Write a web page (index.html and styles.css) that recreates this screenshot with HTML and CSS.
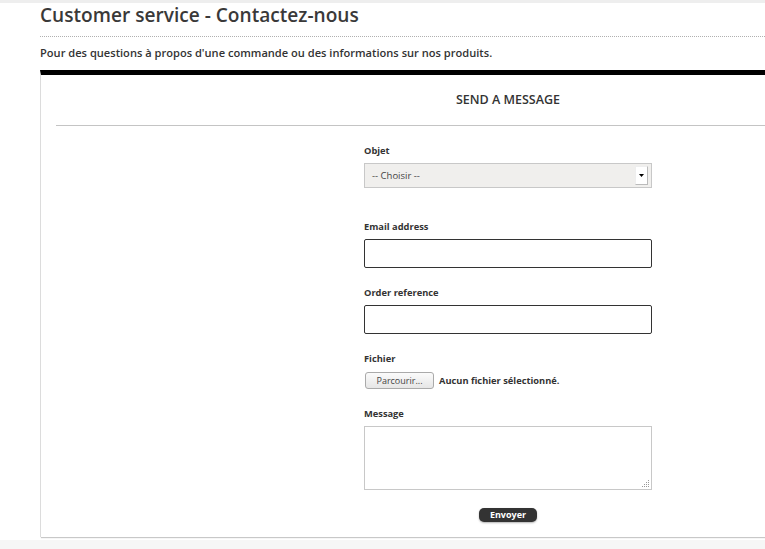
FILE: index.html
```html
<!DOCTYPE html>
<html lang="fr">
<head>
<meta charset="utf-8">
<title>Customer service - Contactez-nous</title>
<link rel="stylesheet" href="styles.css">
</head>
<body>
<div class="page">
  <h1 class="page-heading">Customer service - Contactez-nous</h1>
  <p class="intro">Pour des questions à propos d'une commande ou des informations sur nos produits.</p>
  <form class="contact-box">
    <h3 class="box-title">SEND A MESSAGE</h3>
    <div class="box-body">
      <div class="side"></div>
      <div class="fields">
        <div class="group">
          <label class="lbl">Objet</label>
          <div class="select">
            <span class="select-text">-- Choisir --</span>
            <span class="select-arrow"><svg width="5" height="3" viewBox="0 0 5 3"><path d="M0 0H5L2.5 3Z" fill="#000"/></svg></span>
          </div>
        </div>
        <div class="group">
          <label class="lbl">Email address</label>
          <div class="input"></div>
        </div>
        <div class="group">
          <label class="lbl">Order reference</label>
          <div class="input"></div>
        </div>
        <div class="group">
          <label class="lbl">Fichier</label>
          <div class="file">
            <span class="file-btn">Parcourir...</span>
            <span class="file-text">Aucun fichier sélectionné.</span>
          </div>
        </div>
        <div class="group">
          <label class="lbl">Message</label>
          <div class="textarea">
            <svg class="grip" width="8" height="8" viewBox="0 0 8 8"><g fill="#999"><rect x="6" y="0" width="1" height="1"/><rect x="6" y="2" width="1" height="1"/><rect x="6" y="4" width="1" height="1"/><rect x="6" y="6" width="1" height="1"/><rect x="4" y="2" width="1" height="1"/><rect x="4" y="4" width="1" height="1"/><rect x="4" y="6" width="1" height="1"/><rect x="2" y="4" width="1" height="1"/><rect x="2" y="6" width="1" height="1"/><rect x="0" y="6" width="1" height="1"/></g></svg>
          </div>
        </div>
        <div class="submit-row">
          <span class="submit">Envoyer</span>
        </div>
      </div>
    </div>
  </form>
</div>
</body>
</html>
```

FILE: styles.css
```css
html, body {
  margin: 0;
  padding: 0;
  overflow: hidden;
}
body {
  background: #f6f6f6;
  font-family: "Open Sans", "Liberation Sans", sans-serif;
  color: #333;
  height: 549px;
}
.page {
  background: #fff;
  border-top: 3px solid #eeeeee;
  padding: 0 0 3px 40px;
  width: 765px;
  overflow: hidden;
  box-sizing: border-box;
}
.page-heading {
  margin: 0;
  font-size: 19.1px;
  font-weight: 600;
  line-height: 24px;
  padding-bottom: 9px;
  color: #3a3939;
  border-bottom: 1px dotted #b0b0b0;
}
.intro {
  margin: 0;
  padding: 8px 0 9px;
  font-size: 11.1px;
  font-weight: 600;
  line-height: 16px;
}
.contact-box {
  display: block;
  width: 936px;
  border-top: 5px solid #000;
  border-left: 1px solid #dcdcdc;
  box-shadow: 0 2px 1px -1px #c8c8c8;
  background: #fff;
  padding: 0 16px 15px 15px;
  box-sizing: border-box;
}
.box-title {
  margin: 0;
  text-align: center;
  font-size: 12.5px;
  font-weight: 600;
  line-height: 16px;
  padding: 17px 0 17px;
  border-bottom: 1px solid #c4c4c4;
  color: #333;
}
.box-body {
  display: grid;
  grid-template-columns: 308px 288px;
  padding-top: 19px;
}
.group {
  margin-bottom: 19px;
}
.lbl {
  display: block;
  font-size: 9.3px;
  font-weight: 700;
  line-height: 12px;
  margin-bottom: 6px;
  color: #333;
}
.select {
  height: 25px;
  border: 1px solid #c8c8c8;
  background: #f0efed;
  box-sizing: border-box;
  display: flex;
  align-items: center;
  justify-content: space-between;
  padding: 0 3px 0 7px;
  margin-bottom: 33px;
}
.select-text {
  font-size: 9.5px;
  color: #444;
}
.select-arrow {
  width: 11px;
  height: 17px;
  background: #fff;
  border: 1px solid #bbb;
  border-left-color: #eee;
  border-top-color: #eee;
  display: flex;
  align-items: center;
  justify-content: center;
}
.input {
  height: 29px;
  border: 1px solid #333;
  border-radius: 2px;
  box-sizing: border-box;
}
.file {
  display: flex;
  align-items: center;
  gap: 5px;
  padding-left: 1px;
  margin-top: 7px;
}
.file-btn {
  display: inline-block;
  width: 69px;
  height: 17px;
  box-sizing: border-box;
  border: 1px solid #aaa;
  border-radius: 3px;
  background: linear-gradient(#fbfbfb, #e6e6e6);
  font-size: 9px;
  line-height: 15px;
  text-align: center;
  color: #444;
}
.file-text {
  font-size: 9.3px;
  font-weight: 700;
  color: #333;
}
.textarea {
  position: relative;
  height: 64px;
  border: 1px solid #c8c8c8;
  box-sizing: border-box;
}
.grip {
  position: absolute;
  right: 1px;
  bottom: 1px;
}
.submit-row {
  display: flex;
  justify-content: center;
  margin-top: -1px;
}
.submit {
  display: inline-block;
  width: 58px;
  height: 14px;
  background: #333;
  border-radius: 5px;
  color: #fff;
  font-size: 9px;
  font-weight: 700;
  line-height: 14px;
  text-align: center;
  box-shadow: 0 1px 2px rgba(0,0,0,0.3);
}
```
